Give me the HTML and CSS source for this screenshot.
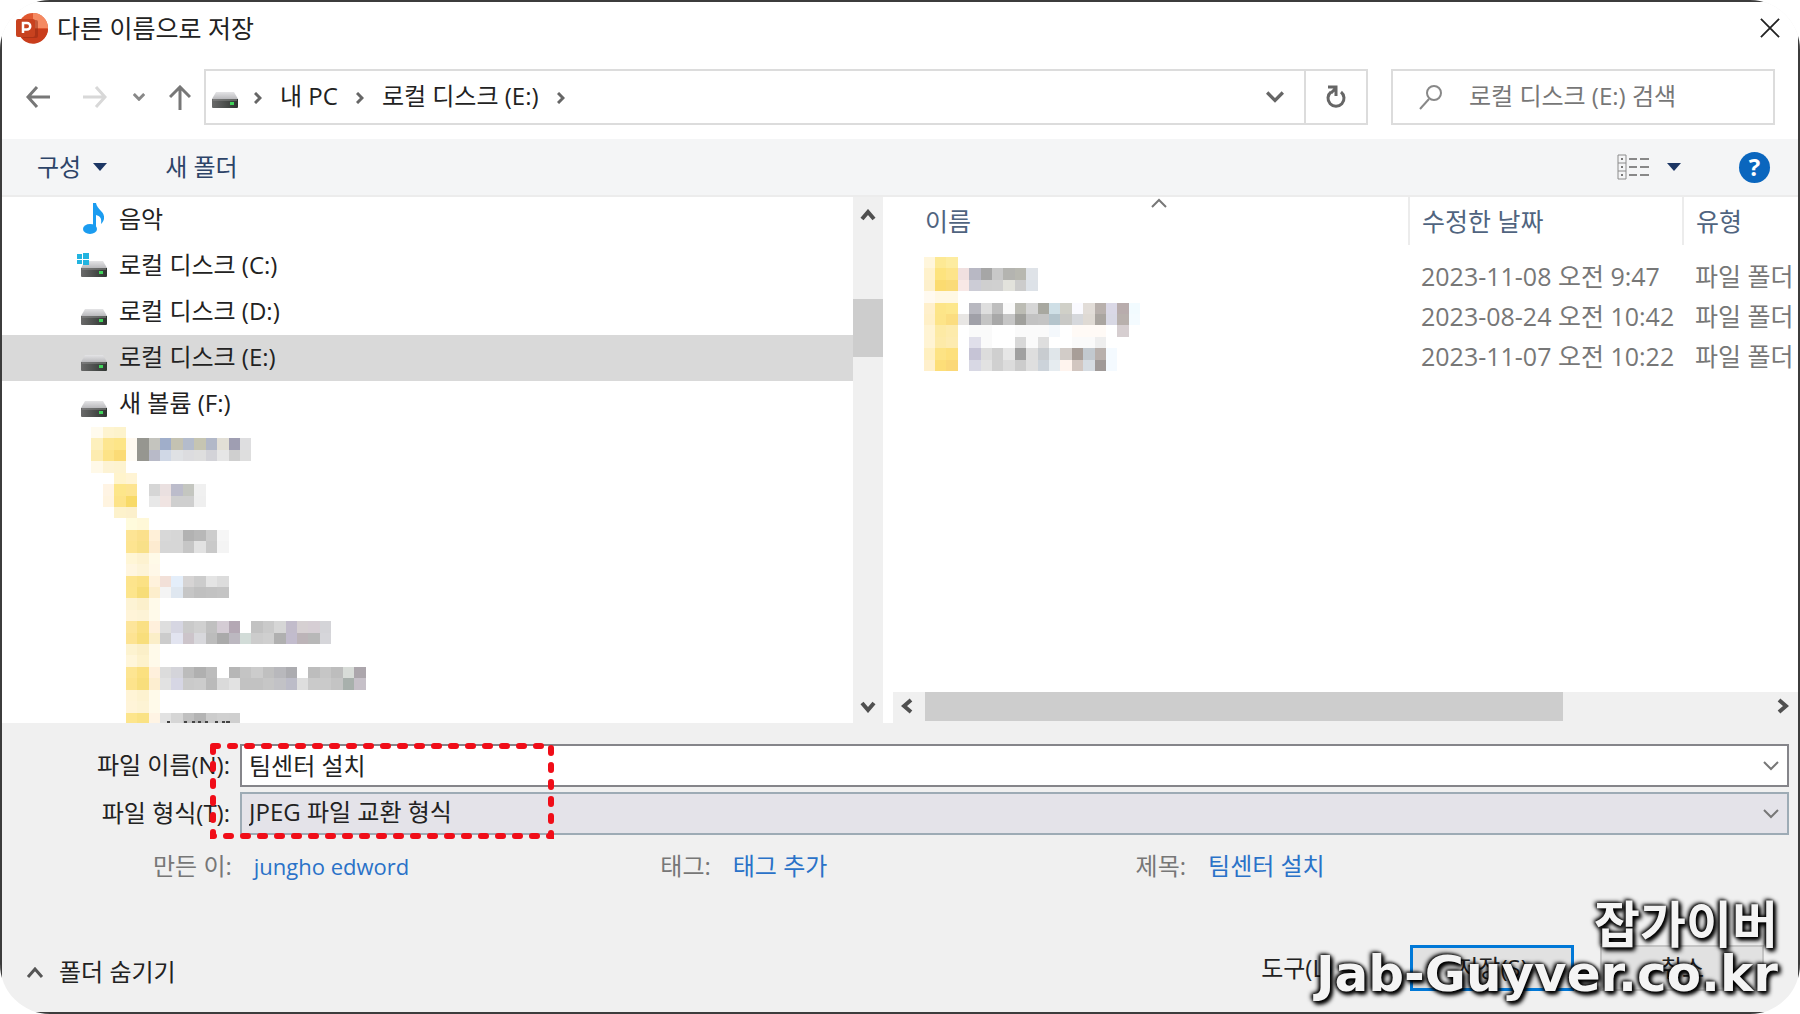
FILE: index.html
```
<!DOCTYPE html>
<html lang="ko">

<head>
    <meta charset="UTF-8">
    <meta name="viewport" content="width=device-width, initial-scale=1.0">
    <title>다른 이름으로 저장</title>
    <link rel="stylesheet" href="styles.css">
</head>

<body>

    <svg width="0" height="0" class="defs">
        <defs>
            <linearGradient id="driveTop" x1="0" y1="0" x2="0" y2="1">
                <stop offset="0" stop-color="#e4e4e6" />
                <stop offset="1" stop-color="#b9b9bc" />
            </linearGradient>
            <linearGradient id="driveFront" x1="0" y1="0" x2="1" y2="0">
                <stop offset="0" stop-color="#6a6a6a" />
                <stop offset="1" stop-color="#2e3430" />
            </linearGradient>
            <symbol id="drive" viewBox="0 0 26 16">
                <path d="M4 0h18l4 7H0z" fill="url(#driveTop)" />
                <path d="M0 7h26v8a1 1 0 0 1-1 1H1a1 1 0 0 1-1-1z" fill="url(#driveFront)" />
                <path d="M1 8h24" stroke="#8c8c8c" />
                <rect x="18" y="10" width="4" height="3" fill="#3fd45a" />
            </symbol>
            <symbol id="down" viewBox="0 0 16 10">
                <path d="M1 1l7 7 7-7" fill="none" stroke="currentColor" />
            </symbol>
            <symbol id="right" viewBox="0 0 8 12">
                <path d="M1 1l5 5-5 5" fill="none" stroke="currentColor" />
            </symbol>
        </defs>
    </svg>

    <div class="window">
        <header class="titlebar">
            <svg class="app-icon" viewBox="0 0 32 32">
                <circle cx="17" cy="16" r="15" fill="#e0572f" />
                <path d="M17 1a15 15 0 0 1 15 15H17z" fill="#f58a62" />
                <path d="M2 17h30a15 15 0 0 1-29 5z" fill="#c93d1c" />
                <rect x="6" y="8" width="16" height="18" rx="2" fill="#8f2a12" opacity=".5" />
                <rect x="0" y="7" width="19" height="18" rx="2" fill="#c8421f" />
                <path d="M7 21V11h4a3 3 0 0 1 0 6.500H7" fill="none" stroke="#fff" stroke-width="2.500" />
            </svg>
            <h1>다른 이름으로 저장</h1>
            <button class="close" aria-label="닫기">
                <svg width="20" height="20" viewBox="0 0 22 22"><path d="M1 1l20 20M21 1L1 21" stroke="#222" stroke-width="2" /></svg>
            </button>
        </header>

        <nav class="navbar">
            <div class="arrows">
                <button aria-label="뒤로"><svg width="24" height="22" viewBox="0 0 24 22"><path d="M24 11H2M11 1L2 11l9 10" fill="none" stroke="#777" stroke-width="3" /></svg></button>
                <button aria-label="앞으로" disabled><svg width="24" height="22" viewBox="0 0 24 22"><path d="M0 11h22M13 1l9 10-9 10" fill="none" stroke="#d8d8d8" stroke-width="3" /></svg></button>
                <button class="recent" aria-label="최근 위치"><svg width="12" height="8"><use href="#down" stroke-width="4" /></svg></button>
                <button aria-label="위로"><svg width="22" height="25" viewBox="0 0 22 25"><path d="M11 25V2M1 12L11 2l10 10" fill="none" stroke="#777" stroke-width="3" /></svg></button>
            </div>
            <div class="address">
                <svg class="drive" width="26" height="16"><use href="#drive" /></svg>
                <svg class="sep" width="8" height="12"><use href="#right" stroke-width="3" /></svg>
                <button class="crumb">내 PC</button>
                <svg class="sep" width="8" height="12"><use href="#right" stroke-width="3" /></svg>
                <button class="crumb">로컬 디스크 (E:)</button>
                <svg class="sep" width="8" height="12"><use href="#right" stroke-width="3" /></svg>
                <button class="history" aria-label="이전 위치"><svg width="18" height="12"><use href="#down" stroke-width="3" /></svg></button>
                <button class="refresh" aria-label="새로 고침">
                    <svg width="20" height="24" viewBox="0 0 20 24"><path d="M15 7a8 8 0 1 1-10 0" fill="none" stroke="#666" stroke-width="3" /><path d="M2 2h8v9M10 3L5 8" fill="none" stroke="#666" stroke-width="3" /></svg>
                </button>
            </div>
            <div class="search">
                <svg width="24" height="26" viewBox="0 0 24 26"><circle cx="15" cy="9" r="7" fill="none" stroke="#888" stroke-width="2" /><path d="M10 15L1 25" stroke="#888" stroke-width="2" /></svg>
                <input type="search" placeholder="로컬 디스크 (E:) 검색" aria-label="로컬 디스크 (E:) 검색">
            </div>
        </nav>

        <div class="toolbar">
            <button>구성 <span class="caret"></span></button>
            <button>새 폴더</button>
            <button class="view" aria-label="보기">
                <svg width="32" height="26" viewBox="0 0 32 26">
                    <path d="M1 1h8v24H1zM1 9h8M1 17h8" fill="none" stroke="#8c8c8c" stroke-width="1" />
                    <path d="M4 5h2M4 13h2M4 21h2" stroke="#777" stroke-width="2" />
                    <path d="M12 5h8M23 5h9M12 13h8M23 13h9M12 21h8M23 21h9" stroke="#888" stroke-width="2" />
                </svg>
                <span class="caret"></span>
            </button>
            <button class="help" aria-label="도움말">?</button>
        </div>

        <main>
            <div class="tree">
                <ul>
                    <li><button>
                        <svg class="icon" width="26" height="32" viewBox="0 0 26 32"><ellipse cx="9" cy="26" rx="7" ry="5" fill="#1b9cf0" /><path d="M12 0h3c1 7 9 8 8 16-1 3-2 4-3 5 1-6-1-8-5-9v14h-3z" fill="#1b9cf0" /></svg>
                        음악</button></li>
                    <li><button>
                        <svg class="icon system" width="30" height="24" viewBox="0 0 30 24">
                            <use href="#drive" x="4" y="8" width="26" height="16" />
                            <path d="M0 1h5v5H0zM6 0h6v6H6zM0 7h5v4H0zM6 7h6v5H6z" fill="#22b4e0" />
                        </svg>
                        로컬 디스크 (C:)</button></li>
                    <li><button><svg class="icon low" width="26" height="16"><use href="#drive" /></svg>로컬 디스크 (D:)</button></li>
                    <li><button class="selected"><svg class="icon low" width="26" height="16"><use href="#drive" /></svg>로컬 디스크 (E:)</button></li>
                    <li><button><svg class="icon low" width="26" height="16"><use href="#drive" /></svg>새 볼륨 (F:)</button></li>
                </ul>
                <svg class="mosaic" id="folders" width="297" height="297" viewBox="0 0 26 26"></svg>
            </div>
            <div class="vscroll">
                <svg width="16" height="12" viewBox="0 0 16 12"><path d="M2 10l6-7 6 7" fill="none" stroke="#505050" stroke-width="4" /></svg>
                <div class="vthumb"></div>
                <svg width="16" height="12" viewBox="0 0 16 12"><path d="M2 2l6 7 6-7" fill="none" stroke="#505050" stroke-width="4" /></svg>
            </div>

            <div class="files">
                <table>
                    <thead>
                        <tr>
                            <th class="name">이름
                                <svg class="sort" width="16" height="10" viewBox="0 0 16 10"><path d="M1 9l7-7 7 7" fill="none" stroke="#777" stroke-width="2" /></svg>
                            </th>
                            <th class="date">수정한 날짜</th>
                            <th class="type">유형</th>
                        </tr>
                    </thead>
                    <tbody>
                        <tr>
                            <td rowspan="3" class="names"><svg class="mosaic" id="items" width="229" height="114" viewBox="0 0 20 10"></svg></td>
                            <td>2023-11-08 오전 9:47</td>
                            <td>파일 폴더</td>
                        </tr>
                        <tr>
                            <td>2023-08-24 오전 10:42</td>
                            <td>파일 폴더</td>
                        </tr>
                        <tr>
                            <td>2023-11-07 오전 10:22</td>
                            <td>파일 폴더</td>
                        </tr>
                    </tbody>
                </table>
                <div class="hscroll">
                    <svg width="12" height="16" viewBox="0 0 12 16"><path d="M10 2L3 8l7 6" fill="none" stroke="#505050" stroke-width="4" /></svg>
                    <div class="track"><div class="hthumb"></div></div>
                    <svg width="12" height="16" viewBox="0 0 12 16"><path d="M2 2l7 6-7 6" fill="none" stroke="#505050" stroke-width="4" /></svg>
                </div>
            </div>
        </main>

        <form class="details">
            <label for="filename">파일 이름(N):</label>
            <div class="combo">
                <input id="filename" type="text" value="팀센터 설치">
                <svg width="16" height="10"><use href="#down" stroke-width="2" /></svg>
            </div>
            <label for="filetype">파일 형식(T):</label>
            <div class="combo type-combo">
                <select id="filetype">
                    <option>JPEG 파일 교환 형식</option>
                </select>
                <svg width="16" height="10"><use href="#down" stroke-width="2" /></svg>
            </div>
            <svg class="highlight" viewBox="0 0 344 96"><rect x="3" y="3" width="338" height="90" fill="none" stroke="#f00d18" stroke-width="6" stroke-linecap="round" stroke-dasharray="5 12" /></svg>
        </form>

        <div class="meta">
            <div><span>만든 이:</span><a href="#" class="author">jungho edword</a></div>
            <div><span>태그:</span><a href="#">태그 추가</a></div>
            <div><span>제목:</span><a href="#">팀센터 설치</a></div>
        </div>

        <footer>
            <button class="hide"><svg width="18" height="12" viewBox="0 0 18 12"><path d="M2 11l7-8 7 8" fill="none" stroke="#555" stroke-width="3" /></svg>폴더 숨기기</button>
            <button class="tools">도구(L) <span class="caret"></span></button>
            <button class="save">저장(S)</button>
            <button class="cancel">취소</button>
            <div class="watermark">
                <p>잡가이버</p>
                <p>Jab-Guyver.co.kr</p>
            </div>
        </footer>
    </div>

    <script src="script.js"></script>
</body>

</html>
```
FILE: styles.css
```
* {
    box-sizing: border-box;
}

body {
    margin: 0;
    background: #fff;
    font-family: "Open Sans", "Noto Sans CJK KR", sans-serif;
    font-size: 24px;
    line-height: 30px;
    color: #222;
}

button,
input,
select {
    font: inherit;
    color: inherit;
    background: none;
    border: 0;
    padding: 0;
    margin: 0;
    outline: 0;
    white-space: nowrap;
}

svg {
    display: block;
    flex: none;
}

.defs {
    position: absolute;
}

.window {
    display: flex;
    flex-direction: column;
    min-height: 100vh;
    border: 2px solid #3c3c3c;
    background: #f0f0f0;
    clip-path: inset(0 round 50px);
}

.titlebar {
    display: flex;
    align-items: center;
    height: 54px;
    padding: 0 18px 2px 14px;
    background: #fff;
}

.app-icon {
    width: 32px;
    height: 32px;
}

h1 {
    flex: 1;
    margin: 0 0 0 9px;
    font-size: 25px;
    font-weight: 400;
}

/* navigation row */
.navbar {
    display: flex;
    padding: 13px 23px 14px 24px;
    background: #fff;
}

.arrows {
    display: flex;
    align-items: center;
    width: 178px;
    gap: 33px;
    color: #888;
}

.arrows .recent {
    margin: 0 -9px 0 -7px;
}

.address {
    display: flex;
    align-items: center;
    flex: 1;
    height: 56px;
    border: 2px solid #dcdcdc;
    color: #666;
}

.address .drive {
    margin: 6px 11px 0 6px;
}

.sep {
    margin: 2px 18px 0 5px;
}

.crumb {
    padding-bottom: 2px;
    color: #222;
    margin-right: 13px;
}

.history {
    margin-left: auto;
    margin-right: 20px;
}

.refresh {
    display: flex;
    align-items: center;
    justify-content: center;
    width: 62px;
    height: 100%;
    border-left: 2px solid #dcdcdc;
}

.search {
    display: flex;
    align-items: center;
    gap: 26px;
    width: 384px;
    margin-left: 23px;
    padding-left: 26px;
    border: 2px solid #dcdcdc;
}

.search input {
    flex: 1;
    min-width: 0;
    padding-bottom: 2px;
}

.search input::placeholder {
    color: #777;
    opacity: 1;
}

/* command bar */
.toolbar {
    display: flex;
    align-items: center;
    height: 58px;
    padding: 0 28px 0 35px;
    gap: 58px;
    background: #f4f5f6;
    border-bottom: 2px solid #ececec;
    color: #2d4468;
}

.toolbar button {
    display: flex;
    align-items: center;
    gap: 12px;
}

.caret {
    border: 7px solid transparent;
    border-top: 8px solid #1c3664;
    border-bottom: 0;
}

.toolbar .view {
    margin-left: auto;
    gap: 18px;
}

.toolbar .help {
    justify-content: center;
    width: 31px;
    height: 31px;
    border-radius: 50%;
    background: #0a66be;
    color: #fff;
    font-weight: 700;
}

main {
    display: flex;
    flex: 1;
    background: #fff;
}

/* folder tree */
.tree {
    width: 851px;
    height: 526px;
    overflow: hidden;
}

.tree ul {
    list-style: none;
    margin: 0;
    padding: 0;
}

.tree button {
    display: flex;
    align-items: center;
    width: 100%;
    height: 46px;
    padding: 0 0 3px 79px;
}

.tree .selected {
    background: #d9d9d9;
}

.icon {
    margin-right: 12px;
}

.icon.system {
    margin-left: -4px;
}

.icon.low {
    margin-top: 12px;
}

.tree .mosaic {
    margin-left: 78px;
}

.vscroll {
    display: flex;
    flex-direction: column;
    align-items: center;
    width: 30px;
    padding: 12px 0 10px;
    background: #f0f0f0;
}

.vthumb {
    width: 100%;
    height: 58px;
    margin: 78px 0 auto;
    background: #cdcdcd;
}

/* file list */
.files {
    display: flex;
    flex-direction: column;
    flex: 1;
    min-width: 0;
    padding-left: 10px;
}

table {
    width: 100%;
    table-layout: fixed;
    border-collapse: collapse;
    font-size: 25px;
    color: #777;
}

th {
    position: relative;
    height: 48px;
    padding: 0 0 0 12px;
    border-left: 2px solid #ececec;
    font-weight: 400;
    text-align: left;
    color: #50647f;
}

th.name {
    padding-left: 32px;
    border-left: 0;
}

th.date {
    width: 274px;
}

th.type {
    width: 115px;
}

.sort {
    position: absolute;
    top: 1px;
    left: 50%;
}

td {
    height: 40px;
    padding: 0 0 2px 12px;
    white-space: nowrap;
    overflow: hidden;
}

tbody::before {
    content: "";
    display: block;
    height: 12px;
}

td.names {
    padding: 0 0 6px 30px;
}

.hscroll {
    display: flex;
    align-items: flex-start;
    gap: 12px;
    height: 31px;
    margin-top: auto;
    padding: 0 9px 0 8px;
    background: #f0f0f0;
}

.hscroll svg {
    margin-top: 6px;
}

.track {
    flex: 1;
}

.hthumb {
    width: 76%;
    height: 29px;
    background: #cdcdcd;
}

/* name and type fields */
.details {
    position: relative;
    display: grid;
    grid-template-columns: 228px 1fr;
    row-gap: 5px;
    column-gap: 10px;
    align-items: center;
    padding: 21px 9px 0 0;
}

.details label {
    padding-bottom: 2px;
    text-align: right;
}

.combo {
    display: grid;
    grid-template-columns: 1fr;
    align-items: center;
    height: 43px;
    border: 2px solid #85858a;
    background: #fff;
    color: #222;
}

.combo input,
.combo select,
.combo svg {
    grid-area: 1 / 1;
}

.combo input,
.combo select {
    width: 100%;
    height: 100%;
    padding: 0 0 3px 7px;
    appearance: none;
}

.combo svg {
    justify-self: end;
    margin-right: 8px;
    color: #777;
    pointer-events: none;
}

.type-combo {
    border-color: #9dabb5;
    background: #e4e3e9;
}

.highlight {
    position: absolute;
    left: 208px;
    top: 20px;
    width: 344px;
    height: 96px;
}

.meta {
    display: grid;
    grid-template-columns: 507fr 475fr 662fr;
    padding: 16px 0 0 151px;
    color: #777;
}

.meta div {
    display: flex;
    gap: 22px;
}

.meta a {
    color: #2a72c8;
    text-decoration: none;
}

.meta .author {
    font-size: 22px;
}

footer {
    position: relative;
    display: flex;
    align-items: center;
    padding: 64px 34px 21px 24px;
}

footer button {
    display: flex;
    align-items: center;
    justify-content: center;
}

.hide {
    gap: 15px;
    margin: 8px auto 0 0;
}

.tools {
    gap: 14px;
    margin-right: 50px;
}

.tools .caret {
    border-top-color: #333;
}

.save,
.cancel {
    width: 164px;
    height: 46px;
}

footer .save {
    margin-right: 26px;
    border: 3px solid #0078d7;
    background: #e1e1e1;
}

footer .cancel {
    border: 2px solid #c4c4c4;
    background: #e1e1e1;
}

.watermark {
    position: absolute;
    right: 20px;
    bottom: 14px;
    font-family: "DejaVu Sans", "Noto Sans CJK KR", sans-serif;
    font-size: 50px;
    font-weight: 700;
    line-height: 48px;
    text-align: right;
    color: #f4f4f4;
    text-shadow: 0 0 3px #000, 2px 2px 4px #000, -2px -1px 4px #000, 2px 3px 5px #000;
    pointer-events: none;
}

.watermark p {
    margin: 0;
}
```
FILE: script.js
```
// each row: [y, first column, colours], "-" leaves a cell empty
const folders = [
    [0, 1, "fffbee fef4d0 fdf3cc"],
    [1, 1, "fdf0bd fde690 fde588 fff9f0 969690 c4c4be a0aeca c4c2b2 b4bccc c6c5b2 b2b8c8 e2dfd6 9f9eb2 dedee0"],
    [2, 1, "fdecb0 fde387 fbdb76 fffcf6 969690 b8bac8 d0d8e6 dfe1e4 dcdcdf dedede d3d3d8 e6e6e6 cfcfcf dedede"],
    [3, 1, "fff9e8 fdf3d4 fdf3d0"],
    [4, 3, "fff4cc fff4d4"],
    [5, 2, "fff4e4 fde68a fde490 - d6d6d6 eae0e0 bcbccb c4c6c0 f0f0f0"],
    [6, 2, "fff4e0 fde388 f8da68 - e8e8e8 f0e4e2 cfcfcf cfcfcf efefef"],
    [7, 3, "fdf2cc fcf0cc"],
    [8, 4, "fffbdc fff8d8"],
    [9, 4, "fde494 fbe08c fff0d8 d8d8d8 d6d6d6 b2b2b2 b8b8b8 cccccc f6f6f6"],
    [10, 4, "fde490 f8e088 fdebd0 d6d6d6 d6d6d6 c6c6c6 e2e2e2 c9c9c9 f4f4f4"],
    [11, 4, "fff6d6 fdf2d0 fffae8"],
    [12, 4, "fff6e0 fdf4d8 fff8e8"],
    [13, 4, "fde48c fbe184 fff2dc f2e0d8 e4eefa d6d4d4 cccccc e4e4e4 dcdcdc"],
    [14, 4, "fde58c f7dd78 fdeecc f4f4f4 dfe7f0 c6c6c6 c0c0c0 c2c2c2 c4c4c4"],
    [15, 4, "fdf3d4 fcf0cc fffaea"],
    [16, 4, "fff4d8 fdf3d6 fffaea"],
    [17, 4, "fde59a fae084 fff0dc dedede d6d6e2 cacaca d0d0d0 c0c0c0 d4ccd4 b4a8b4 - c2c2c2 cacaca d6d6d6 c2bccb d6d0d2 d6ced4 d4d4d8"],
    [18, 4, "fde392 f8de7c fbeec8 cccccc e2e4f0 ccc4ca d8d8dc bcbcbc aaaaaa bcb8c0 d2dcd8 cccccc cfcfcf b0b0b0 c2bccd bcb4b8 b8b8b8 d6d6da"],
    [19, 4, "fdf3d0 fbefc8 fffaea"],
    [20, 4, "fff6da fdf2cc fffaea"],
    [21, 4, "fde592 fbe080 fff0dc dcdcdc d4d4da bcbcbc b0b0b0 bcbcbc - b6b6b6 c4c4c4 cccccc c0c0c0 b8b8bc acacb0 - bdbdbd c6c6c6 bdbdbd d8dcd8 aca6ac"],
    [22, 4, "fde38c f8de7c fdeed0 e2e2e2 d6d6e4 cacaca cccccc bababa dadada e2e2e2 c2c2c2 c2c2c2 c6c6c6 c2c2c6 bcbcc8 dedede cacaca cacaca c4c4c4 a8b0ac c6c0c8"],
    [23, 4, "fff4d6 fdf2d0 fffaea"],
    [24, 4, "fff4d8 fdf3d4 fffaea"],
    [25, 4, "fde58c fae284 fff4e4 e2e2e2 d6d6d6 c0c0c0 b4b4b4 cccccc d0d0d0 cfcfcf"]
];

const items = [
    [0, 0, "fff6dc fde994 fdeca0"],
    [1, 0, "fff2cc fde37e fde48a f0e0e0 b8b8c4 a6a6a6 c8c8c8 b4b4b0 b8b8b0 dfe3e8"],
    [2, 0, "fdf0cc fbdb70 fadb78 f8e8e6 ccccd6 cfcfcf d0d0d0 e2e2dc cccccc dde2e8"],
    [3, 0, "fffaf0 fff8e4 fff8e4"],
    [4, 0, "fff0cc fde588 fde78c - b8b8c0 dedede bebebe fafafa bcbcb4 d6d6d6 a8a8a0 cfdfe6 d0d0c8 fafaff e2ddd8 b8b0ac dad8e6 b8acac f2fbff"],
    [5, 0, "fff0c8 fde488 fbdd80 e8e6e4 a0a0a8 c4c4c4 a8a8a8 c6c6c6 a0a09c c2c2c2 c4c4c4 b4c4cc c9c9c6 d6d8dc dfdad4 aaa5a0 d8d8e4 b8b0ac f4fbff"],
    [6, 0, "fff4d4 fdeaa4 fdebac - fafafa fafafa - - fafafa fafafa fafafa f4f8fc - fffaf6 fffaf6 fffaf6 - d6ced0"],
    [7, 0, "fff4d4 fdeaa8 fdebb0 - e0dfea fafafa - - d8d8d8 fafafa dedede - - fafafa fafafa eeeeee"],
    [8, 0, "fff0c0 fde384 fde07c - c6c4d6 dcdcdc cfcfcf e6e6e6 a0a0a0 dedede c8ccd0 e0e6ea d2ccc8 a89e98 c2c9cf b8b0ac f4faff"],
    [9, 0, "fff0cc fdde78 fbd878 - d8d8e4 e2e2e2 d0d0d0 dcdcdc cccccc dfdfdf ccd3da e6ecf0 fff4ee d2c6c0 d6dce2 a09a98 f4faff"]
];

function addRect(svg, x, y, w, h, color) {
    const rect = document.createElementNS("http://www.w3.org/2000/svg", "rect");
    rect.setAttribute("x", x);
    rect.setAttribute("y", y);
    rect.setAttribute("width", w);
    rect.setAttribute("height", h);
    rect.setAttribute("fill", color);
    rect.setAttribute("shape-rendering", "crispEdges");
    svg.appendChild(rect);
}

function drawMosaic(id, rows) {
    const svg = document.getElementById(id);
    for (const [y, start, colors] of rows) {
        colors.split(" ").forEach((c, i) => {
            if (c !== "-") addRect(svg, start + i, y, 1, 1, "#" + c);
        });
    }
}

drawMosaic("folders", folders);
drawMosaic("items", items);

// tops of the next label, cut off by the pane edge
for (const x of [7.6, 9.1, 9.8, 10.3, 10.9, 11.8, 12.4, 12.8]) {
    addRect(document.getElementById("folders"), x, 25.7, 0.3, 0.3, "#444");
}
```
